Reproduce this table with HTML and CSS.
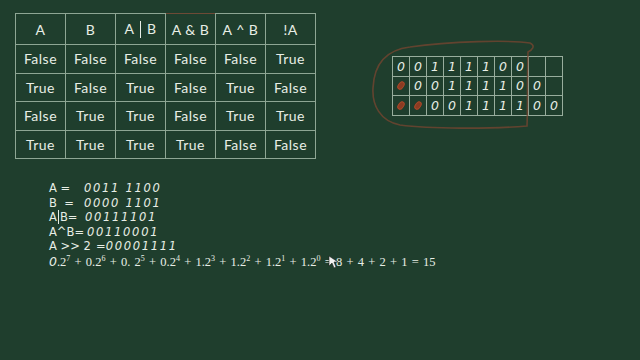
FILE: index.html
```html
<!DOCTYPE html>
<html>
<head>
<meta charset="utf-8">
<link rel="stylesheet" href="styles.css">
</head>
<body>
<div class="board">
  <div class="top">
    <table class="truth">
      <tr class="head">
        <th>A</th><th>B</th><th>A <span class="bar"></span> B</th><th class="marked">A &amp; B</th><th>A ^ B</th><th>!A</th>
      </tr>
      <tr><td>False</td><td>False</td><td>False</td><td>False</td><td>False</td><td>True</td></tr>
      <tr><td>True</td><td>False</td><td>True</td><td>False</td><td>True</td><td>False</td></tr>
      <tr><td>False</td><td>True</td><td>True</td><td>False</td><td>True</td><td>True</td></tr>
      <tr><td>True</td><td>True</td><td>True</td><td>True</td><td>False</td><td>False</td></tr>
    </table>
    <div class="bits">
      <span>0</span><span>0</span><span>1</span><span>1</span><span>1</span><span>1</span><span>0</span><span>0</span><span></span><span></span>
      <span><i class="dot"></i></span><span>0</span><span>0</span><span>1</span><span>1</span><span>1</span><span>1</span><span>0</span><span>0</span><span></span>
      <span><i class="dot"></i></span><span><i class="dot"></i></span><span>0</span><span>0</span><span>1</span><span>1</span><span>1</span><span>1</span><span>0</span><span>0</span>
    </div>
  </div>
  <div class="notes">
    <div class="line"><span class="lbl l1">A =</span><span class="num">0011 1100</span></div>
    <div class="line"><span class="lbl l1">B&nbsp;&nbsp;=</span><span class="num">0000 1101</span></div>
    <div class="line"><span class="lbl l3">A<span class="vbar"></span>B=</span><span class="num">00111101</span></div>
    <div class="line"><span class="lbl l3">A^B=</span><span class="num">00110001</span></div>
    <div class="line"><span class="lbl l5">A &gt;&gt; 2</span><span>=</span><span class="num">00001111</span></div>
    <div class="line math"><span class="num first">0</span>.2<sup>7</sup> + 0.2<sup>6</sup> + 0. 2<sup>5</sup> + 0.2<sup>4</sup> + 1.2<sup>3</sup> + 1.2<sup>2</sup> + 1.2<sup>1</sup> + 1.2<sup>0</sup> <span class="arrow">=</span> 8 + 4 + 2 + 1 = 15</div>
  </div>
  <svg class="loop" width="640" height="360" viewBox="0 0 640 360">
    <path d="M410 47 C450 41 510 40 530 43 C536 46 532 50 528 52 C527 80 528 105 527 126 C490 129 430 129 400 125 C380 121 372 105 373 88 C374 65 385 50 410 47" fill="none" stroke="#7a4630" stroke-width="1.6" opacity="0.75"/>
    <path d="M329 256 L329 266 L332 263 L334 268 L336 267 L334 262 L338 262 Z" fill="#f2f2f2" stroke="#222" stroke-width="0.6"/>
  </svg>
</div>
</body>
</html>
```
FILE: styles.css
```css
html, body {
  margin: 0;
  padding: 0;
  background: #1f3e2d;
}
.board {
  position: relative;
  width: 640px;
  height: 360px;
  overflow: hidden;
  color: #e8eee6;
  font-family: "Lato", "DejaVu Sans", sans-serif;
}
.top {
  display: flex;
  align-items: flex-start;
  padding: 13px 0 0 15px;
}
.truth {
  border-collapse: collapse;
  border: 1px solid #8ea694;
}
.truth th, .truth td {
  border: 1px solid #8ea694;
  width: 49px;
  padding: 0;
  text-align: center;
  font-size: 14px;
  font-weight: normal;
  letter-spacing: 0.5px;
}
.truth th {
  height: 30px;
}
.truth td {
  height: 27.5px;
}
.truth th.marked {
  border-top-color: #6e4a36;
}
.bar {
  display: inline-block;
  width: 1px;
  height: 17px;
  background: #e8eee6;
  vertical-align: -4px;
  margin: 0 2px;
}
.bits {
  margin: 43px 0 0 76px;
  display: grid;
  grid-template-columns: repeat(10, 17px);
  grid-auto-rows: 19.6px;
  border-top: 1px solid #98ad9d;
  border-left: 1px solid #98ad9d;
}
.bits span {
  border-right: 1px solid #98ad9d;
  border-bottom: 1px solid #98ad9d;
  display: flex;
  align-items: center;
  justify-content: center;
  font-family: "DejaVu Sans", sans-serif;
  font-style: italic;
  font-size: 12.5px;
}
.dot {
  display: block;
  width: 6px;
  height: 9px;
  border-radius: 50%;
  background: #8c3b22;
  transform: rotate(35deg);
  box-shadow: inset 0 0 0 1px #a4492a;
}
.notes {
  padding: 181px 0 0 49px;
  position: absolute;
  top: 0;
  left: 0;
  font-family: "DejaVu Sans", sans-serif;
  font-size: 11.5px;
}
.line {
  height: 14.5px;
  line-height: 14.5px;
  white-space: nowrap;
}
.lbl {
  display: inline-block;
}
.l1 { width: 35px; }
.l3 { min-width: 33px; padding-right: 3px; }
.l5 { width: 47px; }
.vbar {
  display: inline-block;
  width: 1px;
  height: 14px;
  background: #e8eee6;
  vertical-align: -3px;
  margin: 0 1px;
}
.num {
  font-style: italic;
  letter-spacing: 1.7px;
}
.line.math {
  font-family: "Liberation Serif", "DejaVu Serif", serif;
  font-size: 12.5px;
  margin-top: 1px;
  word-spacing: 1.1px;
}
.math .first {
  font-family: "DejaVu Sans", sans-serif;
  letter-spacing: 0;
}
.math sup {
  font-size: 8px;
  vertical-align: 5px;
  line-height: 0;
}
.loop {
  position: absolute;
  top: 0;
  left: 0;
  pointer-events: none;
}
```
